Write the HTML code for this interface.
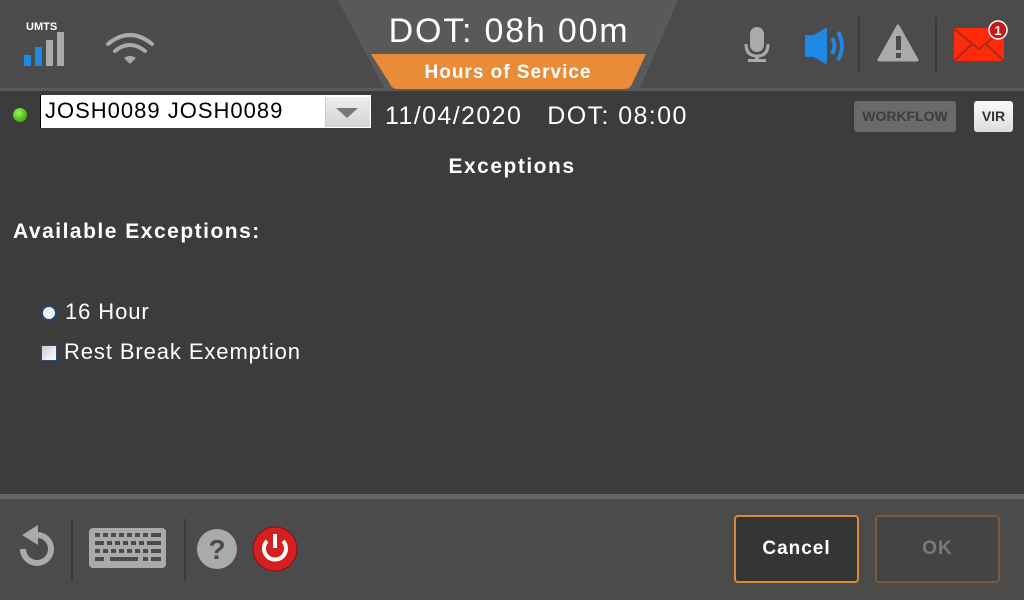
<!DOCTYPE html>
<html><head><meta charset="utf-8"><style>
*{margin:0;padding:0;box-sizing:border-box}
body{width:1024px;height:600px;background:#3c3c3c;font-family:"Liberation Sans",sans-serif;position:relative;overflow:hidden;color:#fff}
.abs{position:absolute;white-space:nowrap}
</style></head><body>
<div class="abs" style="left:0;top:0;width:1024px;height:89px;background:#4b4b4b"></div>
<div class="abs" style="left:0;top:88px;width:1024px;height:3px;background:#5a5a5a"></div>
<svg class="abs" style="left:0;top:0" width="1024" height="92">
<polygon points="338,0 678,0 640,88 384,88" fill="#5a5a5a"/>
<polygon points="344,0 672,0 636,86 388,86" fill="#595959"/>
<path d="M371,54 L646,54 L632,84 Q630,89 624,89 L398,89 Q392,89 390,84 Z" fill="#e88c3a"/>
<text x="26" y="30" font-family="Liberation Sans" font-weight="bold" font-size="11" fill="#fff">UMTS</text>
<rect x="24" y="55" width="7" height="11" fill="#1e88e5"/>
<rect x="35" y="47" width="7" height="19" fill="#1e88e5"/>
<rect x="46" y="40" width="7" height="26" fill="#aaa"/>
<rect x="57" y="32" width="7" height="34" fill="#aaa"/>
<g fill="none" stroke="#aaa" stroke-width="4" stroke-linecap="round">
<path d="M108,44 Q130,26 152,44"/><path d="M115,51 Q130,39 145,51"/></g>
<path d="M124,58 Q130,54 136,58 L130,64 Z" fill="#aaa"/>
<text x="509" y="42" text-anchor="middle" font-family="Liberation Sans" font-size="34" letter-spacing="1.8" fill="#fff">DOT: 08h 00m</text>
<text x="508" y="78" text-anchor="middle" font-family="Liberation Sans" font-weight="bold" font-size="19" letter-spacing="1" fill="#fff">Hours of Service</text>
<rect x="750" y="27" width="14" height="25" rx="7" fill="#aaa"/>
<path d="M746,44 Q746,56 757,56 Q768,56 768,44" stroke="#aaa" stroke-width="3" fill="none"/>
<rect x="755" y="55" width="4" height="5" fill="#aaa"/><rect x="748" y="59" width="18" height="3" fill="#aaa"/>
<path d="M806,36 L814,36 L826,29 L826,63 L814,56 L806,56 Z" fill="#1e88e5" stroke="#1e88e5" stroke-linejoin="round" stroke-width="2"/>
<path d="M832,38 Q837,46 832,54" stroke="#1e88e5" stroke-width="4" fill="none"/>
<path d="M838,32 Q846,46 838,60" stroke="#1e88e5" stroke-width="4" fill="none"/>
<rect x="858" y="17" width="2" height="55" fill="#3a3a3a"/>
<rect x="935" y="17" width="2" height="55" fill="#3a3a3a"/>
<path d="M898,26 L917,60 L879,60 Z" fill="#aaa" stroke="#aaa" stroke-width="3" stroke-linejoin="round"/>
<rect x="896" y="36" width="5" height="14" fill="#4b4b4b"/><rect x="896" y="53" width="5" height="5" fill="#4b4b4b"/>
<rect x="954" y="28" width="50" height="33" fill="#ff2a0a"/>
<path d="M954,29 L979,49 L1004,29 M954,61 L972,44 M1004,61 L986,44" stroke="#a82a1a" stroke-width="2" fill="none"/>
<circle cx="998" cy="30" r="9" fill="#c81818" stroke="#fff" stroke-width="1.5"/>
<text x="998" y="35" text-anchor="middle" font-family="Liberation Sans" font-weight="bold" font-size="13" fill="#fff">1</text>
</svg>
<div class="abs" style="left:13px;top:108px;width:14px;height:14px;border-radius:50%;background:radial-gradient(circle at 40% 35%,#9f4,#4a2 70%);"></div>
<div class="abs" style="left:40px;top:95px;width:331px;height:33px;background:#fff;border-left:1px solid #000"></div>
<div class="abs" style="left:45px;top:98px;font-size:22px;letter-spacing:1px;color:#000">JOSH0089 JOSH0089</div>
<div class="abs" style="left:325px;top:97px;width:45px;height:30px;background:linear-gradient(#eee,#d4d4d4);border-left:1px solid #ccc"></div>
<svg class="abs" style="left:336px;top:107px" width="24" height="12"><path d="M0,1 H22 L11,11 Z" fill="#777"/></svg>
<div class="abs" style="left:385px;top:102px;font-size:25px;letter-spacing:1.4px;color:#fff">11/04/2020&nbsp;&nbsp;&nbsp;DOT: 08:00</div>
<div class="abs" style="left:854px;top:101px;width:102px;height:31px;background:#6a6a6a;border-radius:3px;color:#3c3c3c;font-weight:bold;font-size:14px;text-align:center;line-height:31px">WORKFLOW</div>
<div class="abs" style="left:974px;top:101px;width:39px;height:31px;background:linear-gradient(#fafafa,#ddd);border-radius:3px;color:#333;font-weight:bold;font-size:14px;text-align:center;line-height:31px">VIR</div>
<div class="abs" style="left:0;top:155px;width:1024px;text-align:center;font-weight:bold;font-size:21px;letter-spacing:1.5px">Exceptions</div>
<div class="abs" style="left:13px;top:220px;font-weight:bold;font-size:21px;letter-spacing:1.5px">Available Exceptions:</div>
<div class="abs" style="left:41px;top:305px;width:16px;height:16px;border-radius:50%;background:#f2f2f2;border:2px solid #1a4a80"></div>
<div class="abs" style="left:65px;top:299px;font-size:22px;letter-spacing:0.9px">16 Hour</div>
<div class="abs" style="left:41px;top:345px;width:16px;height:16px;background:linear-gradient(135deg,#ccc,#fff);border:1px solid #2a5080"></div>
<div class="abs" style="left:64px;top:339px;font-size:22px;letter-spacing:0.9px">Rest Break Exemption</div>
<div class="abs" style="left:0;top:494px;width:1024px;height:106px;background:#4b4b4b"></div>
<div class="abs" style="left:0;top:494px;width:1024px;height:5px;background:#676767"></div>
<svg class="abs" style="left:0;top:499px" width="320" height="101">
<path d="M37,36 A14,14 0 1,1 23,50" stroke="#aaa" stroke-width="6" fill="none"/>
<path d="M22,36 L38,26 L38,46 Z" fill="#aaa"/>
<rect x="71" y="20" width="2" height="62" fill="#3a3a3a"/><rect x="184" y="20" width="2" height="62" fill="#3a3a3a"/>
<rect x="89" y="29" width="77" height="40" rx="4" fill="#aaa"/>
<g fill="#4b4b4b">
<rect x="95" y="34" width="5" height="4"/><rect x="103" y="34" width="5" height="4"/><rect x="111" y="34" width="5" height="4"/><rect x="119" y="34" width="5" height="4"/><rect x="127" y="34" width="5" height="4"/><rect x="135" y="34" width="5" height="4"/><rect x="143" y="34" width="5" height="4"/><rect x="151" y="34" width="10" height="4"/>
<rect x="95" y="42" width="9" height="4"/><rect x="107" y="42" width="5" height="4"/><rect x="115" y="42" width="5" height="4"/><rect x="123" y="42" width="5" height="4"/><rect x="131" y="42" width="5" height="4"/><rect x="139" y="42" width="5" height="4"/><rect x="147" y="42" width="14" height="4"/>
<rect x="95" y="50" width="5" height="4"/><rect x="103" y="50" width="5" height="4"/><rect x="111" y="50" width="5" height="4"/><rect x="119" y="50" width="5" height="4"/><rect x="127" y="50" width="5" height="4"/><rect x="135" y="50" width="5" height="4"/><rect x="143" y="50" width="5" height="4"/><rect x="151" y="50" width="10" height="4"/>
<rect x="95" y="58" width="9" height="4"/><rect x="110" y="58" width="28" height="4"/><rect x="143" y="58" width="5" height="4"/><rect x="151" y="58" width="10" height="4"/></g>
<circle cx="217" cy="50" r="20" fill="#aaa"/>
<text x="217" y="60" text-anchor="middle" font-family="Liberation Sans" font-weight="bold" font-size="28" fill="#4b4b4b">?</text>
<circle cx="275" cy="50" r="22" fill="#d42020" stroke="#8a1010" stroke-width="1"/>
<path d="M267,42 A11,11 0 1,0 283,42" stroke="#fff" stroke-width="4" fill="none"/>
<rect x="273" y="35" width="4" height="14" fill="#fff"/>
</svg>
<div class="abs" style="left:734px;top:515px;width:125px;height:68px;border:2px solid #d8893a;border-radius:4px;background:#353535;text-align:center;line-height:64px;font-weight:bold;font-size:19px;letter-spacing:1px">Cancel</div>
<div class="abs" style="left:875px;top:515px;width:125px;height:68px;border:2px solid #7a5a3a;border-radius:4px;background:#444;text-align:center;line-height:64px;font-weight:bold;font-size:19px;color:#7a7a7a;letter-spacing:1px">OK</div>
</body></html>
